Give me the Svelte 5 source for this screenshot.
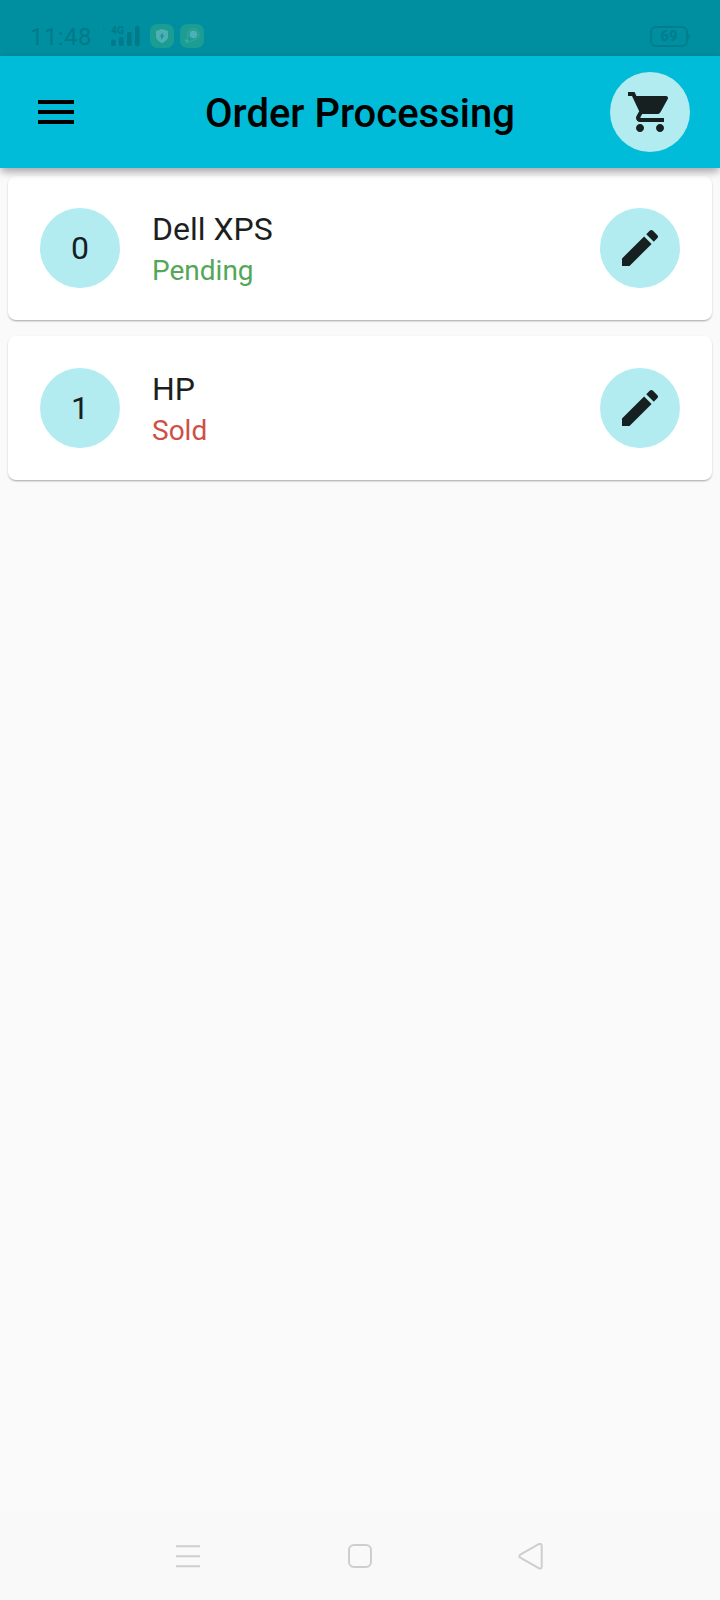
<script>
  let title = 'Order Processing';
  let orders = [
    { name: 'Dell XPS', status: 'Pending' },
    { name: 'HP', status: 'Sold' }
  ];
</script>

<div class="screen">
  <div class="status-bar">
    <span class="clock">11:48</span>
    <svg class="signal" width="32" height="24" viewBox="0 0 32 24">
      <path d="M1 3.500 2.600 5 1 6.500" fill="none" stroke="#00808f" />
      <text x="9" y="9.500" textLength="13" lengthAdjust="spacingAndGlyphs">4G</text>
      <rect x="9" y="15.500" width="4.500" height="6.500" rx="1.500" />
      <rect x="17" y="13" width="4.500" height="9" rx="1.500" />
      <rect x="25" y="8" width="4.500" height="14" rx="1.500" />
      <rect x="33" y="2" width="4.500" height="20" rx="1.500" />
    </svg>
    <svg class="badge first" width="24" height="24" viewBox="0 0 24 24">
      <rect width="24" height="24" rx="7.500" fill="#1b9d92" />
      <path d="M12 5 18 7v5.500c0 3-2.600 5-6 6.500-3.400-1.500-6-3.500-6-6.500V7z" fill="#4fafb4" />
      <path d="M13 8.500 9.500 12.600h2l-.6 3.300 3.600-4.400h-2z" fill="#149491" />
    </svg>
    <svg class="badge" width="24" height="24" viewBox="0 0 24 24">
      <rect width="24" height="24" rx="7.500" fill="#1b9d92" />
      <circle cx="13.500" cy="10.300" r="3.900" fill="#4fafb4" />
      <path d="M8.200 12.500A5.700 5.700 0 1 1 13.500 16L8.200 18.600a2.100 2.100 0 0 1-3-2.600z" fill="none" stroke="#3fa9a8" stroke-width=".8" />
      <circle cx="7.300" cy="16.600" r="1.100" fill="#4fafb4" />
    </svg>
    <div class="battery"><span>69</span></div>
  </div>

  <header class="app-bar">
    <button class="menu" aria-label="Menu">
      <svg width="48" height="48" viewBox="0 0 24 24"><path d="M3 18h18v-2H3v2zm0-5h18v-2H3v2zm0-7v2h18V6H3z" /></svg>
    </button>
    <h1>{title}</h1>
    <button class="avatar" aria-label="Cart">
      <svg width="48" height="48" viewBox="0 0 24 24"><path d="M7 18c-1.100 0-1.990.9-1.990 2S5.900 22 7 22s2-.9 2-2-.9-2-2-2zM1 2v2h2l3.600 7.590-1.350 2.450c-.16.28-.25.61-.25.96 0 1.100.9 2 2 2h12v-2H7.420c-.14 0-.25-.11-.25-.25l.03-.12.9-1.630h7.450c.75 0 1.410-.41 1.750-1.030l3.580-6.490c.08-.14.12-.31.12-.48 0-.55-.45-1-1-1H5.210l-.94-2H1zm16 16c-1.100 0-1.990.9-1.990 2s.89 2 1.990 2 2-.9 2-2-.9-2-2-2z" /></svg>
    </button>
  </header>

  <main>
    {#each orders as order, i}
      <div class="card">
        <div class="avatar">{i}</div>
        <div class="info">
          <div class="name">{order.name}</div>
          <div class="state" class:sold={order.status === 'Sold'}>{order.status}</div>
        </div>
        <button class="avatar" aria-label="Edit order">
          <svg width="48" height="48" viewBox="0 0 24 24"><path d="M3 17.250V21h3.750L17.810 9.940l-3.750-3.750L3 17.250zM20.710 7.040c.39-.39.39-1.020 0-1.410l-2.340-2.340c-.39-.39-1.020-.39-1.410 0l-1.830 1.830 3.750 3.750 1.830-1.830z" /></svg>
        </button>
      </div>
    {/each}
  </main>

  <nav class="nav-bar">
    <svg width="28" height="28" viewBox="0 0 28 28"><path d="M2 3.300h24M2 13.300h24M2 23.300h24" /></svg>
    <svg width="28" height="28" viewBox="0 0 28 28"><rect x="3" y="2" width="22" height="22" rx="5" /></svg>
    <svg width="28" height="28" viewBox="0 0 28 28"><path d="M2.300 11.700 20.700 1.200Q23.700.2 23.700 3v20.600q0 2.800-3 1.600L2.300 14.700q-2-1.500 0-3z" /></svg>
  </nav>
</div>

<style>
  :global(body) {
    margin: 0;
    background: #fafafa;
  }
  .screen {
    display: flex;
    flex-direction: column;
    width: 720px;
    height: 1600px;
    font-family: Roboto, sans-serif;
    color: #1d1f1f;
    background: #fafafa;
  }
  button {
    border: 0;
    padding: 0;
    background: none;
    font: inherit;
  }
  svg {
    display: block;
    flex-shrink: 0;
  }

  .status-bar {
    display: flex;
    align-items: center;
    box-sizing: border-box;
    height: 56px;
    padding: 16px 30px 0 30px;
    background: #008fa1;
  }
  .clock {
    width: 72px;
    padding-top: 2px;
    font-size: 24px;
    letter-spacing: 0.4px;
    color: #007a89;
  }
  .signal {
    overflow: visible;
    fill: #007a89;
  }
  .signal text {
    font-size: 11px;
    font-weight: 700;
  }
  .badge.first {
    margin: 0 6px 0 16px;
  }
  .battery {
    position: relative;
    display: flex;
    align-items: center;
    justify-content: center;
    box-sizing: border-box;
    width: 38px;
    height: 21px;
    margin-left: auto;
    margin-right: 2px;
    border: 2px solid #007e8e;
    border-radius: 6px;
    font-size: 15px;
    font-weight: 900;
    color: #007e8e;
  }
  .battery::after {
    content: '';
    position: absolute;
    right: -4px;
    width: 2px;
    height: 5px;
    border-radius: 0 2px 2px 0;
    background: #007e8e;
  }

  .app-bar {
    display: flex;
    align-items: center;
    justify-content: space-between;
    box-sizing: border-box;
    height: 112px;
    padding: 0 30px 0 32px;
    background: #00bcd8;
    box-shadow: 0 4px 8px -2px rgba(0, 0, 0, 0.2), 0 5px 8px rgba(0, 0, 0, 0.14), 0 2px 12px rgba(0, 0, 0, 0.08);
    z-index: 1;
  }
  .menu {
    width: 78px;
    color: #000;
  }
  h1 {
    margin: 0;
    padding-top: 2px;
    font-size: 40px;
    font-weight: 500;
    color: #000;
  }
  .avatar {
    display: flex;
    align-items: center;
    justify-content: center;
    flex-shrink: 0;
    width: 80px;
    height: 80px;
    border-radius: 50%;
    background: #b2ebf0;
    font-size: 32px;
    color: #172021;
  }
  .avatar svg {
    fill: #172021;
  }

  main {
    flex: 1;
    display: flex;
    flex-direction: column;
    gap: 16px;
    padding: 8px;
  }
  .card {
    display: flex;
    align-items: center;
    box-sizing: border-box;
    height: 144px;
    padding: 0 32px;
    border-radius: 8px;
    background: #fff;
    box-shadow: 0 2px 2px -1px rgba(0, 0, 0, 0.2), 0 1px 2px rgba(0, 0, 0, 0.12), 0 1px 3px rgba(0, 0, 0, 0.06);
  }
  .info {
    flex: 1;
    padding: 4px 0 0 32px;
  }
  .name {
    font-size: 32px;
    line-height: 38px;
  }
  .state {
    margin-top: 4px;
    font-size: 28px;
    line-height: 38px;
    color: #54a759;
  }
  .state.sold {
    color: #d04f44;
  }

  .nav-bar {
    display: flex;
    justify-content: center;
    gap: 144px;
    box-sizing: border-box;
    height: 88px;
    padding-top: 31px;
    background: #f9f9f9;
  }
  .nav-bar svg {
    fill: none;
    stroke: #cecece;
    stroke-width: 2;
  }
</style>
